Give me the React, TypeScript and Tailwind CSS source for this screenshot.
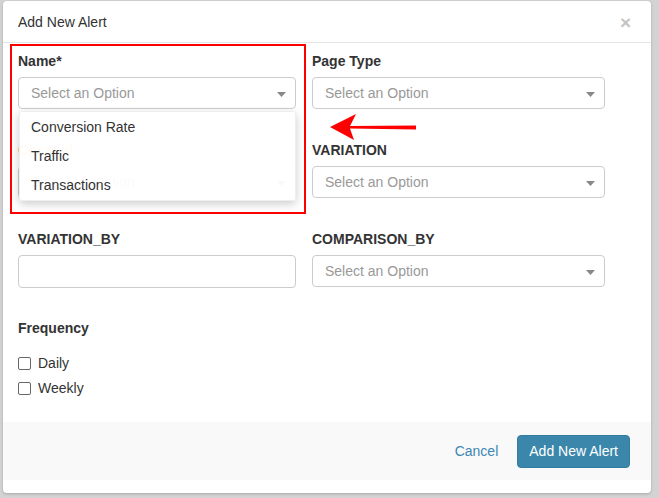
import React from "react";

const Caret = () => (
  <svg width="9" height="5" viewBox="0 0 9 5" className="absolute right-[9px] top-[14px]">
    <path d="M0 0 L9 0 L4.5 5 Z" fill="#888" />
  </svg>
);

const Select = ({ w }: { w: string }) => (
  <div className={`relative h-[32px] ${w} rounded-[4px] border border-[#cccccc] bg-white flex items-center pl-[12px] text-[14px] text-[#999999]`}>
    Select an Option
    <Caret />
  </div>
);

const Label = ({ children, className = "" }: { children: React.ReactNode; className?: string }) => (
  <div className={`h-[20px] leading-[20px] text-[14px] font-bold text-[#333333] mb-[6px] ${className}`}>{children}</div>
);

export default function App() {
  return (
    <div
      className="w-[659px] h-[498px] bg-[#d3d3d3] pt-[1px] pl-[3px] overflow-hidden"
      style={{ fontFamily: '"Liberation Sans", Arial, sans-serif' }}
    >
      <div className="relative w-[648px] h-[492px] bg-white rounded-[4px] shadow-[0_1px_3px_rgba(0,0,0,0.2)] flex flex-col">
        {/* header */}
        <div className="h-[42px] border-b border-[#e5e5e5] flex items-center justify-between pl-[15px] pr-[20px] pt-[2px] shrink-0">
          <span className="text-[14px] text-[#333333]">Add New Alert</span>
          <span className="text-[19px] font-bold text-[#c4c4c4] leading-none">×</span>
        </div>

        {/* body */}
        <div className="flex-1 pt-[8px] pl-[15px]">
          <div className="grid grid-cols-[278px_293px] gap-x-[16px] gap-y-[31px]">
            <div>
              <Label>Name*</Label>
              <Select w="w-[278px]" />
            </div>
            <div>
              <Label>Page Type</Label>
              <Select w="w-[293px]" />
            </div>
            <div>
              <Label className="text-[#f0ad4e]">Channel</Label>
              <Select w="w-[278px]" />
            </div>
            <div>
              <Label>VARIATION</Label>
              <Select w="w-[293px]" />
            </div>
            <div>
              <Label className="mb-[5px]">VARIATION_BY</Label>
              <div className="h-[33px] w-[278px] rounded-[4px] border border-[#cccccc] bg-white" />
            </div>
            <div>
              <Label className="mb-[5px]">COMPARISON_BY</Label>
              <Select w="w-[293px]" />
            </div>
          </div>

          <div className="mt-[30px]">
            <div className="h-[20px] leading-[20px] text-[14px] font-bold text-[#333333]">Frequency</div>
            <div className="mt-[15px] flex flex-col gap-[5px]">
              {["Daily", "Weekly"].map((t) => (
                <label key={t} className="h-[20px] flex items-center gap-[7px] text-[14px] text-[#333333]">
                  <span className="w-[13px] h-[13px] rounded-[2px] border border-[#666666] bg-white" />
                  {t}
                </label>
              ))}
            </div>
          </div>
        </div>

        {/* footer */}
        <div className="h-[58px] bg-[#f9f9f9] mb-[13px] flex items-center justify-end pr-[21px] gap-[19px] shrink-0">
          <span className="text-[14px] text-[#3d87b3]">Cancel</span>
          <button className="h-[33px] px-[11px] rounded-[4px] bg-[#3b87ab] border border-[#337ca0] text-white text-[14px]">
            Add New Alert
          </button>
        </div>

        {/* dropdown overlay */}
        <div className="absolute left-[16px] top-[110px] w-[277px] h-[90px] rounded-[3px] bg-white/95 shadow-[0_3px_10px_rgba(0,0,0,0.2)] border border-[#eeeeee] flex flex-col pt-[1px]">
          {["Conversion Rate", "Traffic", "Transactions"].map((t) => (
            <div key={t} className="h-[30px] flex items-center pl-[11px] text-[14px] text-[#333333]">
              {t}
            </div>
          ))}
        </div>

        {/* red annotation box */}
        <div className="absolute left-[7px] top-[43px] w-[296px] h-[170px] border-2 border-[#ff0000] pointer-events-none" />

        {/* red arrow */}
        <svg className="absolute left-[322px] top-[110px]" width="92" height="32" viewBox="0 0 92 32">
          <path d="M5 16 L31 3 L25 15 L91 14.5 L91 18.5 L25 17.5 L29 29 Z" fill="#ff0000" />
        </svg>
      </div>
    </div>
  );
}
